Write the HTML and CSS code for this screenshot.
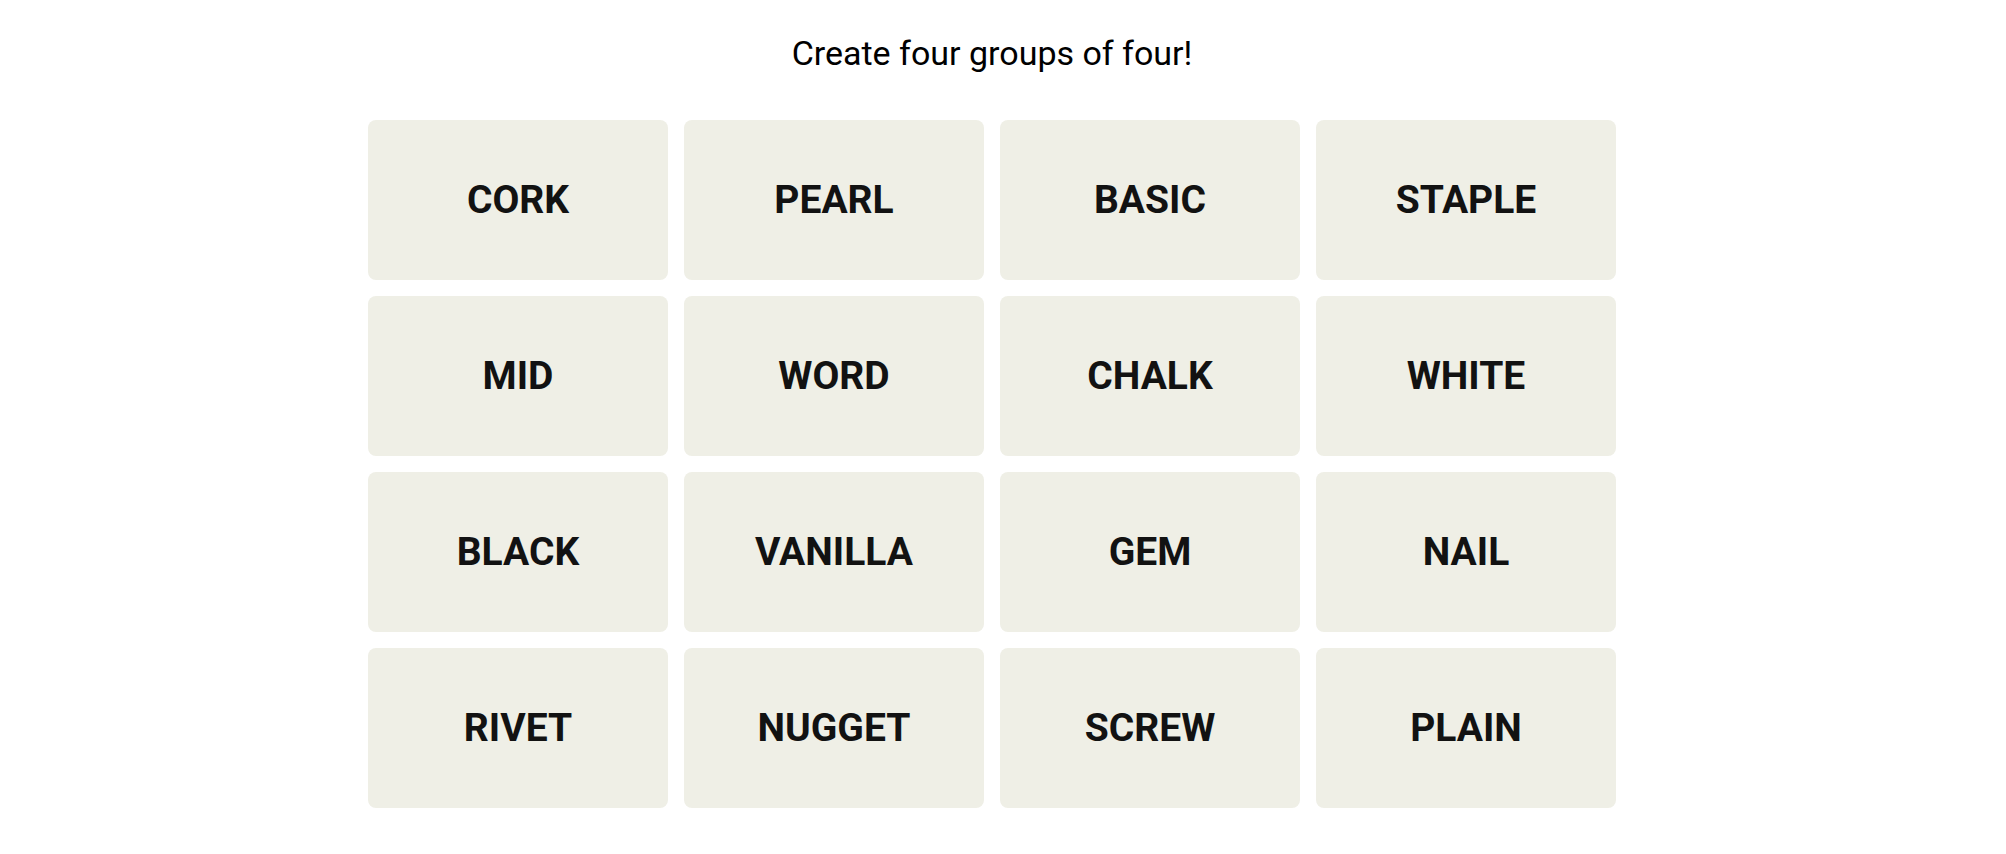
FILE: index.html
```html
<!DOCTYPE html>
<html lang="en">
<head>
    <meta charset="UTF-8">
    <meta name="viewport" content="width=device-width, initial-scale=1.0">
    <title>Connections</title>
    <link rel="stylesheet" href="styles.css">
</head>
<body>
    <div class="game">
        <p class="prompt">Create four groups of four!</p>

        <div class="board">
            <div class="tile">CORK</div>
            <div class="tile">PEARL</div>
            <div class="tile">BASIC</div>
            <div class="tile">STAPLE</div>
            <div class="tile">MID</div>
            <div class="tile">WORD</div>
            <div class="tile">CHALK</div>
            <div class="tile">WHITE</div>
            <div class="tile">BLACK</div>
            <div class="tile">VANILLA</div>
            <div class="tile">GEM</div>
            <div class="tile">NAIL</div>
            <div class="tile">RIVET</div>
            <div class="tile">NUGGET</div>
            <div class="tile">SCREW</div>
            <div class="tile">PLAIN</div>
        </div>
    </div>
</body>
</html>
```

FILE: styles.css
```css
body { margin: 0; padding: 0 22px 0 0; background: #fff; font-family: Roboto, "Liberation Sans", sans-serif; color: #000; }
.game { width: 1248px; margin: 0 auto; }
.prompt { margin: 33px 0 47px; font-size: 34px; line-height: 40px; text-align: center; }
.board { display: grid; grid-template-columns: repeat(4, 300px); grid-auto-rows: 160px; gap: 16px; }
.tile { display: flex; align-items: center; justify-content: center; background: #efefe6; border-radius: 8px; font-size: 39px; font-weight: 700; color: #121212; cursor: pointer; }
```
